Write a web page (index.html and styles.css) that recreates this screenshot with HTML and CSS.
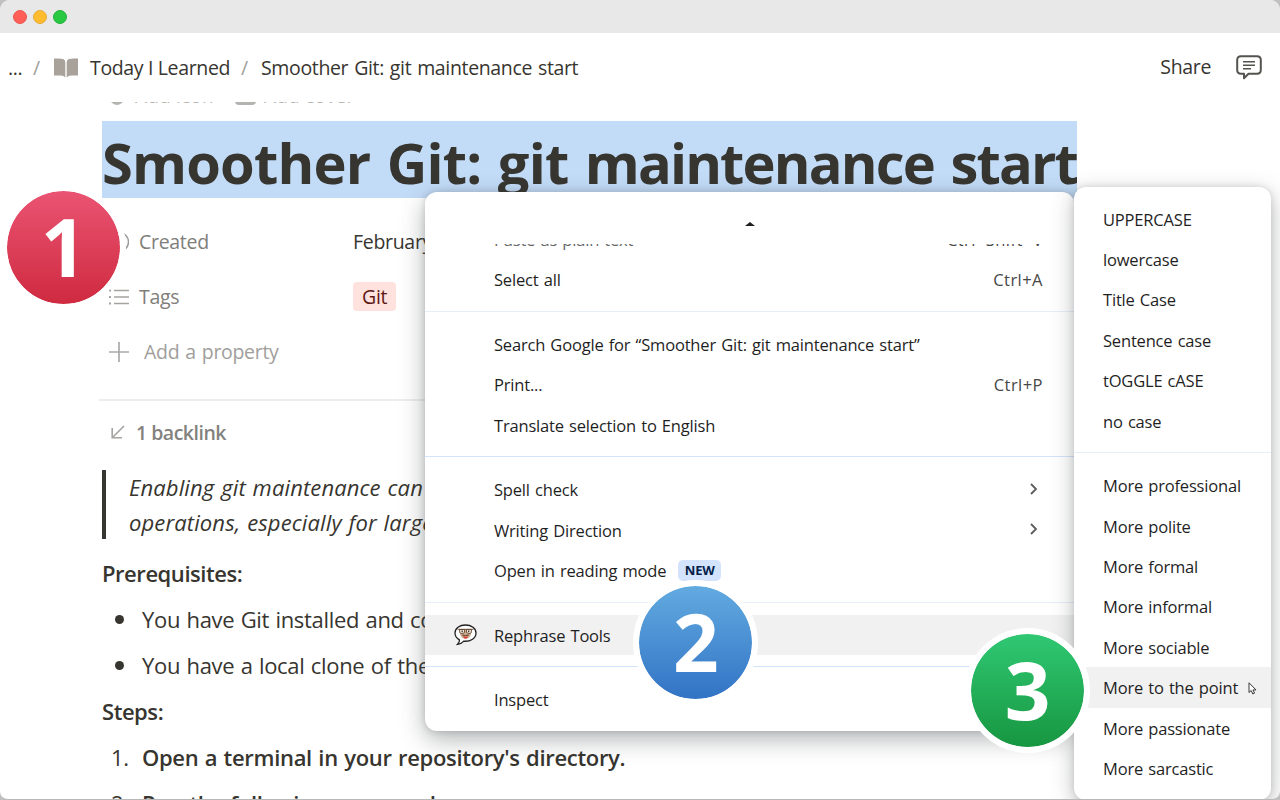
FILE: index.html
```
<!DOCTYPE html>
<html lang="en">
<head>
    <meta charset="UTF-8">
    <meta name="viewport" content="width=device-width, initial-scale=1.0">
    <title>Smoother Git: git maintenance start</title>
    <link rel="stylesheet" href="styles.css">
</head>
<body>
    <div class="window">
        <div class="title-bar">
            <span class="dot red"></span>
            <span class="dot yellow"></span>
            <span class="dot green"></span>
        </div>

        <header class="top-nav">
            <span class="more">...</span>
            <span class="slash first">/</span>
            <svg class="book" width="24" height="20" viewBox="0 0 24 20">
                <path fill="#a8a29a" d="M0 .6Q6 0 9.200 1Q11.300 1.800 11.300 4V19.500Q9.500 17.800 7 17.600H0zM24 .6Q18 0 14.800 1Q12.700 1.800 12.700 4V19.500Q14.500 17.800 17 17.600H24z"/>
            </svg>
            <span class="crumb parent">Today I Learned</span>
            <span class="slash">/</span>
            <span class="crumb current">Smoother Git: git maintenance start</span>
            <span class="share">Share</span>
            <svg class="comment" width="26" height="25" viewBox="0 0 26 25" fill="none" stroke="#55534e">
                <path stroke-width="2" stroke-linejoin="round" d="M5 1.200H21Q24.800 1.200 24.800 5V15Q24.800 18.800 21 18.800H12.500L8 23.200V18.800H5Q1.200 18.800 1.200 15V5Q1.200 1.200 5 1.200z"/>
                <path stroke-width="1.500" d="M7 6.700H19M7 10.200H19M7 13.700H15"/>
            </svg>
        </header>

        <main class="page">
            <div class="page-actions">
                <span class="clip-icon round"></span><span class="act">Add icon</span>
                <span class="clip-icon square"></span><span class="act">Add cover</span>
            </div>

            <h1>Smoother Git: git <span>maintenance start</span></h1>

            <div class="property">
                <svg width="20" height="20" viewBox="0 0 20 20" fill="none" stroke="#9b9a97" stroke-width="1.500"><circle cx="10" cy="10" r="9.500"/><path d="M10 4v6h4"/></svg>
                <span class="label">Created</span>
                <span class="value">February 19, 2024</span>
            </div>
            <div class="property">
                <svg width="20" height="20" viewBox="0 0 20 20" fill="none" stroke="#a5a4a1" stroke-width="1.600">
                    <path d="M5 3.500H20M5 10H20M5 16.500H20"/>
                    <path stroke-width="2" d="M0 3.500H2M0 10H2M0 16.500H2"/>
                </svg>
                <span class="label">Tags</span>
                <span class="tag">Git</span>
            </div>
            <div class="property add">
                <svg width="20" height="20" viewBox="0 0 20 20" fill="none" stroke="#acaba9" stroke-width="1.700"><path d="M10 0V20M0 10H20"/></svg>
                <span class="label">Add a property</span>
            </div>

            <div class="rule"></div>

            <div class="backlink">
                <svg width="14" height="14" viewBox="0 0 14 14" fill="none" stroke="#a5a4a1" stroke-width="1.600"><path d="M13 1L1.500 12.500M1.200 3V12.800H11"/></svg>
                <span>1 backlink</span>
            </div>

            <blockquote>Enabling git maintenance can speed up Git<br>operations, especially for large repositories.</blockquote>

            <h3>Prerequisites:</h3>
            <ul>
                <li>You have Git installed and configured.</li>
                <li>You have a local clone of the repository.</li>
            </ul>
            <h3>Steps:</h3>
            <ol>
                <li><span class="num">1.</span><b>Open a terminal in your repository's directory.</b></li>
                <li><span class="num">2.</span><b>Run the following command:</b></li>
            </ol>
        </main>

        <!-- context menu -->
        <div class="menu main-menu">
            <div class="scroll-up"><span class="arrow"></span></div>
            <div class="clipped">
                <div class="item"><span>Paste as plain text</span><kbd>Ctrl+Shift+V</kbd></div>
            </div>
            <div class="item"><span>Select all</span><kbd>Ctrl+A</kbd></div>
            <div class="sep"></div>
            <div class="item"><span>Search Google for “Smoother Git: git maintenance start”</span></div>
            <div class="item"><span>Print...</span><kbd>Ctrl+P</kbd></div>
            <div class="item"><span>Translate selection to English</span></div>
            <div class="sep blue"></div>
            <div class="item"><span>Spell check</span><svg class="chevron" width="8" height="12" viewBox="0 0 8 12"><path d="M1 1L6 6L1 11"/></svg></div>
            <div class="item"><span>Writing Direction</span><svg class="chevron" width="8" height="12" viewBox="0 0 8 12"><path d="M1 1L6 6L1 11"/></svg></div>
            <div class="item"><span>Open in reading mode</span><span class="new">NEW</span></div>
            <div class="sep"></div>
            <div class="item active">
                <svg class="bubble" width="23" height="22" viewBox="0 0 23 22">
                    <path fill="#fff" stroke="#222" stroke-width="1.300" d="M11.500 1C5.500 1 1 4.500 1 9C1 12 2.500 14.300 5.500 15.800C5.600 17.600 5 19 3.600 20.300C6.500 20 8.500 18.800 9.800 17.200C17 17.700 22 14 22 9C22 4.500 17.500 1 11.500 1z"/>
                    <path fill="#cfae90" d="M6 5.500H17V10Q16 14.500 11.500 14.500Q7 14.500 6 10z"/>
                    <path fill="#6d5240" d="M7.500 11Q9.500 10 11.500 11Q13.500 10 15.500 11Q14 12.500 11.500 11.800Q9 12.500 7.500 11z"/>
                    <path fill="#d83c36" d="M9 12.500H14Q13.500 14.800 11.500 14.800Q9.500 14.800 9 12.500z"/>
                    <path fill="#efe8dc" stroke="#65452c" stroke-width=".9" d="M5.500 5.500H10.500V8.500Q8 11 5.800 8.800zM12.500 5.500H17.500L17.200 8.800Q15 11 12.500 8.500zM3.500 5.300H19.500"/>
                    <path fill="#333" d="M7.500 6.500h1.300v1.800h-1.300zM14 6.500h1.300v1.800h-1.300z"/>
                </svg>
                <span>Rephrase Tools</span>
            </div>
            <div class="sep blue"></div>
            <div class="item"><span>Inspect</span></div>
        </div>

        <div class="menu sub-menu">
            <div class="item">UPPERCASE</div>
            <div class="item">lowercase</div>
            <div class="item">Title Case</div>
            <div class="item">Sentence case</div>
            <div class="item">tOGGLE cASE</div>
            <div class="item">no case</div>
            <div class="sep"></div>
            <div class="item">More professional</div>
            <div class="item">More polite</div>
            <div class="item">More formal</div>
            <div class="item">More informal</div>
            <div class="item">More sociable</div>
            <div class="item active">More to the point
                <svg class="cursor" width="9" height="13" viewBox="0 0 9 13"><path fill="#fff" stroke="#222" stroke-width=".9" d="M1 .8V10.500L3.200 8.500L4.800 12L6.500 11.200L5 7.900H8z"/></svg>
            </div>
            <div class="item">More passionate</div>
            <div class="item">More sarcastic</div>
        </div>

        <!-- step markers -->
        <div class="step one">1</div>
        <div class="step two">2</div>
        <div class="step three">3</div>
    </div>
</body>
</html>
```
FILE: styles.css
```
* {
    box-sizing: border-box;
}

body {
    margin: 0;
    background: #c0c0c0;
    font-family: "Open Sans", "Noto Sans", sans-serif;
    color: #37352f;
}

.window {
    position: relative;
    display: flex;
    flex-direction: column;
    width: 1280px;
    height: 800px;
    overflow: hidden;
    background: #fff;
    border-bottom: 1px solid #b8b8b8;
    border-radius: 10px 10px 8px 8px;
}

.title-bar {
    display: flex;
    align-items: center;
    gap: 6px;
    height: 33px;
    flex: none;
    padding-left: 13px;
    background: #e8e8e8;
}

.dot {
    width: 14px;
    height: 14px;
    border-radius: 50%;
}

.red { background: #ff5f57; border: 1px solid #e95750; }
.yellow { background: #febc2e; border: 1px solid #e5a93a; }
.green { background: #28c840; border: 1px solid #24b03a; }

/* breadcrumbs */
.top-nav {
    display: flex;
    align-items: center;
    height: 69px;
    flex: none;
    padding: 0 18px 0 8px;
    font-size: 19.5px;
    letter-spacing: -0.35px;
    white-space: nowrap;
}

.more { width: 25px; }
.slash { color: #a09f9c; width: 20px; }
.slash.first { width: 21px; }
.book { margin-right: 12px; }
.parent { width: 151px; }
.current { word-spacing: 1.2px; }
.share { margin-left: auto; margin-bottom: 2px; }
.comment { margin-left: 25px; margin-bottom: 1px; }

.page {
    flex: 1;
    overflow: hidden;
    padding: 0 203px 0 102px;
}

.page-actions {
    display: flex;
    height: 19px;
    padding-left: 7px;
    font-size: 19px;
    line-height: 26px;
    color: #b4b3b0;
    white-space: nowrap;
}

.page-actions .act {
    margin-top: -19px;
    width: 100px;
    letter-spacing: 0.2px;
}

.clip-icon {
    height: 18px;
    margin-top: -15px;
    background: #b4b3b0;
}

.clip-icon.round { width: 16px; border-radius: 50%; margin-right: 10px; }
.clip-icon.square { width: 21px; border-radius: 4px; margin-right: 8px; }

h1 {
    width: 975px;
    height: 77px;
    margin: 0 0 16px;
    background: #c2dbf7;
    font-size: 56px;
    line-height: 82px;
    letter-spacing: -0.8px;
    word-spacing: 2.6px;
    white-space: nowrap;
}

h1 span {
    letter-spacing: -1.85px;
    word-spacing: 4px;
}

.property {
    display: flex;
    align-items: center;
    height: 55px;
    padding-left: 7px;
    font-size: 19.5px;
    letter-spacing: -0.3px;
}

.property .label {
    width: 214px;
    margin-left: 10px;
    color: #7f7e7a;
}

.property.add .label {
    margin-left: 15px;
    color: #9f9e9b;
    word-spacing: 1.2px;
}

.tag {
    padding: 0 9px;
    line-height: 29px;
    background: #ffe2dd;
    color: #5d1715;
    border-radius: 4px;
}

.rule {
    height: 2px;
    margin: 20px 0 0 -3px;
    background: #ededec;
}

.backlink {
    display: flex;
    align-items: center;
    gap: 11px;
    height: 62px;
    padding-left: 9px;
    color: #83827e;
    font-size: 19.5px;
    font-weight: 600;
    letter-spacing: -0.5px;
}

blockquote {
    height: 69px;
    margin: 7px 0 11px;
    padding-left: 23px;
    border-left: 4px solid #37352f;
    font-size: 22px;
    font-style: italic;
    line-height: 34.5px;
    letter-spacing: 0.12px;
    word-spacing: 1px;
}

h3 {
    margin: 0;
    font-size: 22px;
    font-weight: 600;
    line-height: 46px;
    letter-spacing: -0.45px;
}

ul, ol {
    margin: 0;
    padding: 0;
    list-style: none;
    font-size: 22px;
    letter-spacing: -0.32px;
    word-spacing: 1px;
}

li {
    display: flex;
    align-items: center;
    height: 46px;
    white-space: nowrap;
}

ul li::before {
    content: "";
    width: 9px;
    height: 9px;
    margin: 0 18px 0 13px;
    border-radius: 50%;
    background: #37352f;
}

.num {
    width: 40px;
    padding-left: 9px;
}

li b {
    font-weight: 600;
}

/* menus */
.menu {
    position: absolute;
    background: #fff;
    color: #1f1f1f;
    font-size: 16.5px;
    letter-spacing: -0.18px;
    word-spacing: 1.1px;
    white-space: nowrap;
}

.main-menu {
    left: 425px;
    top: 192px;
    width: 649px;
    height: 539px;
    border-radius: 12px;
    box-shadow: 0 8px 24px rgba(60, 64, 67, .4), 0 0 6px rgba(60, 64, 67, .2);
}

.scroll-up {
    display: flex;
    justify-content: center;
    height: 52px;
    padding-top: 29.5px;
}

.arrow {
    height: 4px;
    border: 5px solid transparent;
    border-top: 0;
    border-bottom: 4px solid #1f1f1f;
}

.clipped {
    display: flex;
    align-items: flex-end;
    height: 15.7px;
    overflow: hidden;
    color: #666;
}

.clipped .item {
    flex: 1;
}

.item {
    display: flex;
    align-items: center;
    height: 40.4px;
}

.main-menu .item {
    padding: 0 31px 0 69px;
}

kbd {
    margin-left: auto;
    color: #474747;
    font-family: inherit;
    letter-spacing: 0.45px;
}

.sep {
    height: 24.2px;
    padding-top: 11px;
}

.sep::before {
    content: "";
    display: block;
    height: 1px;
    background: #e6eefa;
}

.sep.blue::before {
    background: #d3e3fd;
}

.chevron {
    margin: 0 5px 2px auto;
    fill: none;
    stroke: #5c5c5c;
    stroke-width: 1.8;
}

.new {
    margin-left: 12px;
    width: 43px;
    border-radius: 5px;
    background: #d3e3fd;
    color: #041e49;
    font-size: 13px;
    font-weight: 700;
    line-height: 21px;
    text-align: center;
}

.active {
    background: #f1f1f1;
}

.main-menu .active {
    padding-left: 29px;
}

.bubble {
    margin-right: 17px;
}

.sub-menu {
    left: 1074px;
    top: 187px;
    width: 197px;
    height: 613px;
    padding-top: 12px;
    border-radius: 12px;
    box-shadow: 0 6px 22px rgba(60, 64, 67, .35), 0 0 6px rgba(60, 64, 67, .15);
}

.sub-menu .item {
    padding-left: 29px;
}

.cursor {
    margin-left: 10px;
    margin-top: 2px;
}

/* numbered circles */
.step {
    position: absolute;
    width: 125px;
    height: 125px;
    border: 6px solid #fff;
    border-radius: 50%;
    background-clip: padding-box;
    color: #fff;
    font-size: 80px;
    font-weight: 700;
    line-height: 109px;
    text-align: center;
}

.one { left: 1px; top: 185.4px; background-image: linear-gradient(#ea5472, #cf2a40); }
.two { left: 633.4px; top: 580.4px; background-image: linear-gradient(#62abe0, #3273c5); }
.three { left: 965px; top: 628px; background-image: linear-gradient(#30c873, #179640); }
```
